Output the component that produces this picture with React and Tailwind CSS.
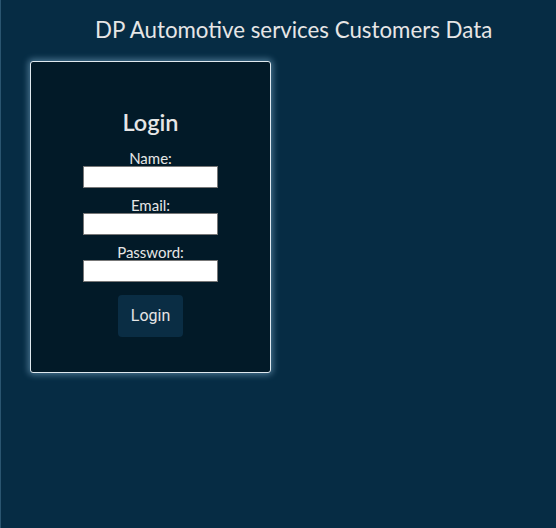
export default function App() {
  return (
    <div className="min-h-[528px] border-l border-[#2a5570] bg-[#062c44] font-['Lato',sans-serif] text-[#e6e6e6]">
      <h1 className="pt-[16px] pl-[94px] text-[22.3px] leading-[28px]">DP Automotive services Customers Data</h1>

      <div className="ml-[29px] mt-[17px] flex h-[312px] w-[241px] flex-col items-center rounded-[3px] border border-[#dfe9ef] bg-[#021a28] pt-[44px] shadow-[0_0_6px_2px_rgba(150,200,230,0.45)]">
        <h2 className="text-[23.5px] font-semibold leading-[32px]">Login</h2>
        <form className="mt-[13px] flex flex-col items-center" onSubmit={e => e.preventDefault()}>
          <label className="text-[15px] leading-[15px]">Name:</label>
          <input type="text" className="h-[22px] w-[135px] border border-[#777] bg-white" />
          <label className="mt-[10px] text-[15px] leading-[15px]">Email:</label>
          <input type="email" className="h-[22px] w-[135px] border border-[#777] bg-white" />
          <label className="mt-[10px] text-[15px] leading-[15px]">Password:</label>
          <input type="password" className="h-[22px] w-[135px] border border-[#777] bg-white" />
          <button type="submit" className="mt-[13px] h-[42px] w-[65px] rounded-[4px] bg-[#0a2d44] font-['Roboto',sans-serif] text-[16px] text-[#e6e6e6]">
            Login
          </button>
        </form>
      </div>
    </div>
  )
}
